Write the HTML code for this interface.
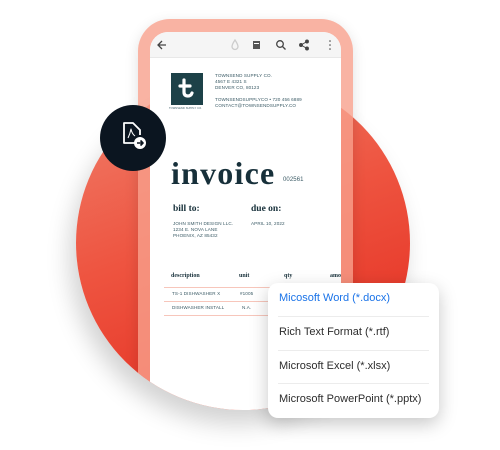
<!DOCTYPE html>
<html><head><style>
*{margin:0;padding:0;box-sizing:border-box}
body{width:500px;height:450px;background:#fff;position:relative;overflow:hidden;font-family:"Liberation Sans",sans-serif}
.circle{position:absolute;left:76px;top:76px;width:334px;height:334px;border-radius:50%;background:linear-gradient(160deg,#f0826e 0%,#ee5440 45%,#e2261a 100%);box-shadow:-6px 14px 24px rgba(0,0,0,.18)}
.clip{position:absolute;left:0;top:0;width:500px;height:450px;clip-path:path("M0 0 H500 V243 H410 A167 167 0 0 1 76 243 H0 Z")}
.phone{position:absolute;left:138px;top:19px;width:215px;height:420px;border-radius:32px;background:rgba(248,160,140,.8);box-shadow:0 4px 14px rgba(0,0,0,.12)}
.screen{position:absolute;left:150px;top:32px;width:191px;height:400px;background:#fff;border-radius:18px 18px 0 0;overflow:hidden}
.tb{height:26px;background:#f5f5f5;border-bottom:1px solid #e8e8e8;position:relative}
.t{position:absolute;font-size:4.6px;color:#3a5a65;line-height:6px;letter-spacing:.1px}
.logo{position:absolute;left:21px;top:41px;width:32px;height:32px;background:#1d4148}
.inv{position:absolute;left:21px;top:123px;font-family:"Liberation Serif",serif;font-weight:bold;font-size:32px;color:#17303a;letter-spacing:1.2px}
.h{position:absolute;font-family:"Liberation Serif",serif;font-weight:bold;color:#17303a;font-size:9.5px}
.th{position:absolute;font-family:"Liberation Serif",serif;font-weight:bold;color:#17303a;font-size:6px}
.ln{position:absolute;left:14px;width:180px;height:1px;background:#f7c6bb}
.badge{position:absolute;left:100px;top:105px;width:66px;height:66px;border-radius:50%;background:#0b1520}
.menu{position:absolute;left:268px;top:283px;width:171px;height:135px;background:#fff;border-radius:10px;box-shadow:0 6px 18px rgba(0,0,0,.22)}
.mi{position:absolute;left:11px;font-size:11px;color:#2c2c2c}
.sep{position:absolute;left:10px;right:10px;height:1px;background:#ececec}
</style></head><body>
<div class="circle"></div>
<div class="clip">
<div class="phone"></div>
<div class="screen">
 <div class="tb">
  <svg width="191" height="26" style="position:absolute;left:0;top:0" fill="none" stroke="#444" stroke-width="1.3">
   <path d="M16 13H8M12 9L8 13L12 17"/>
   <path d="M85 8C83 11 82 13 82 14.5A3 3 0 0 0 88 14.5C88 13 87 11 85 8Z" stroke="#ccc"/>
   <rect x="103" y="9" width="7" height="8" fill="#555" stroke="none"/>
   <rect x="104" y="11" width="5" height="1" fill="#fff" stroke="none"/>
   <circle cx="130" cy="12" r="3.3"/><path d="M132.5 14.5L135.5 17.5"/>
   <circle cx="151" cy="13" r="1.3" fill="#444"/><circle cx="157" cy="9.5" r="1.3" fill="#444"/><circle cx="157" cy="16.5" r="1.3" fill="#444"/><path d="M151 13L157 9.5M151 13L157 16.5" stroke-width="1"/>
   <circle cx="180" cy="9" r=".8" fill="#444" stroke="none"/><circle cx="180" cy="13" r=".8" fill="#444" stroke="none"/><circle cx="180" cy="17" r=".8" fill="#444" stroke="none"/>
  </svg>
 </div>
 <div class="logo"><svg width="32" height="32" fill="none" stroke="#fff" stroke-width="3.2" stroke-linecap="round"><path d="M13 7V19Q13 23 17 23Q20 23 21 20M9 13H19"/></svg></div>
 <div class="t" style="left:19px;top:74px;font-size:2.6px">TOWNSEND SUPPLY CO.</div>
 <div class="t" style="left:65px;top:41px">TOWNSEND SUPPLY CO.<br>4567 E 4321 S<br>DENVER CO, 80123<br><br>TOWNSENDSUPPLYCO • 720 456 6889<br>CONTACT@TOWNSENDSUPPLY.CO</div>
 <div class="inv">invoice</div>
 <div class="t" style="left:133px;top:145px;font-size:6px">002561</div>
 <div class="h" style="left:23px;top:172px">bill to:</div>
 <div class="h" style="left:101px;top:172px">due on:</div>
 <div class="t" style="left:23px;top:189px">JOHN SMITH DESIGN LLC.<br>1234 E. NOVA LANE<br>PHOENIX, AZ 85432</div>
 <div class="t" style="left:101px;top:189px">APRIL 10, 2022</div>
 <div class="th" style="left:21px;top:241px">description</div>
 <div class="th" style="left:89px;top:241px">unit</div>
 <div class="th" style="left:134px;top:241px">qty</div>
 <div class="th" style="left:180px;top:241px">amo</div>
 <div class="ln" style="top:255px"></div>
 <div class="t" style="left:22px;top:259px">TS-1 DISHWASHER X</div>
 <div class="t" style="left:90px;top:259px">#1005</div>
 <div class="ln" style="top:269px"></div>
 <div class="t" style="left:22px;top:273px">DISHWASHER INSTALL</div>
 <div class="t" style="left:92px;top:273px">N.A.</div>
 <div class="ln" style="top:283px"></div>
</div>
</div>
<div class="badge">
 <svg width="66" height="66" fill="none" stroke="#fff" stroke-width="1.8" stroke-linejoin="round">
  <path d="M36 38H24V18H33L40 25V30"/>
  <path d="M28 33Q30 29 31 24Q32 29 35 31" stroke-width="1"/>
  <circle cx="40" cy="38" r="6" fill="#fff" stroke="none"/>
  <path d="M37 38H43M40.5 35.5L43 38L40.5 40.5" stroke="#0b1520" stroke-width="1.6"/>
 </svg>
</div>
<div class="menu">
 <div class="mi" style="top:9px;color:#1a73e8">Micosoft Word (*.docx)</div>
 <div class="sep" style="top:33px"></div>
 <div class="mi" style="top:43px">Rich Text Format (*.rtf)</div>
 <div class="sep" style="top:67px"></div>
 <div class="mi" style="top:77px">Microsoft Excel (*.xlsx)</div>
 <div class="sep" style="top:100px"></div>
 <div class="mi" style="top:110px">Microsoft PowerPoint (*.pptx)</div>
</div>
</body></html>
